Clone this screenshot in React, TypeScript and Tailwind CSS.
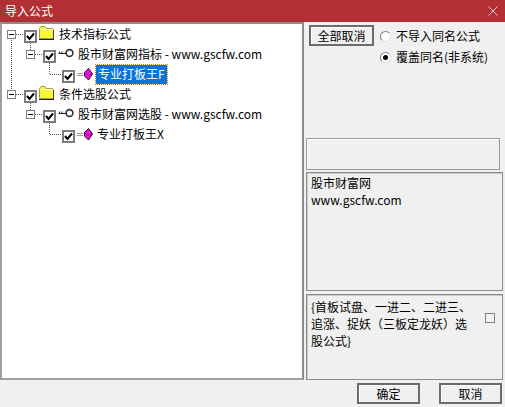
import React from "react";

function Check() {
  return (
    <span className="mt-[4px] flex h-[13px] w-[13px] shrink-0 items-center justify-center border-2 border-[#7c7c7c] bg-white">
      <svg width="9" height="9" viewBox="0 0 9 9"><path d="M1 4 L3.5 7 L8 1.5" fill="none" stroke="#000" strokeWidth="2" /></svg>
    </span>
  );
}

function Minus() {
  return (
    <span className="flex h-[9px] w-[9px] shrink-0 items-center justify-center border border-[#808080] bg-white">
      <span className="h-px w-[5px] bg-black" />
    </span>
  );
}

function Folder({ id }: { id: string }) {
  return (
    <svg width="16" height="14" viewBox="0 0 16 14" className="mb-[3px] shrink-0">
      <defs>
        <pattern id={id} width="2" height="2" patternUnits="userSpaceOnUse">
          <rect width="2" height="2" fill="#ffff00" />
          <rect width="1" height="1" fill="#eeee70" />
          <rect x="1" y="1" width="1" height="1" fill="#eeee70" />
        </pattern>
      </defs>
      <path d="M1.5 12.5 V2.5 L3 0.5 H7 L8.5 2.5 H14.5 L15.5 3.5 V12.5 Z" fill={`url(#${id})`} stroke="#a09a50" />
      <path d="M1 13.5 H16" stroke="#222" />
      <path d="M15.5 4 V13" stroke="#444" />
      <path d="M3 3.5 H14" stroke="#fffde0" />
    </svg>
  );
}

function KeyIcon() {
  return (
    <svg width="16" height="10" viewBox="0 0 16 10" className="mb-[2px] shrink-0">
      <circle cx="11.5" cy="5" r="3.4" fill="#fff" stroke="#333" strokeWidth="1.6" />
      <path d="M0.5 5.5 H8 M1.5 5.5 V3.5 M4 5.5 V3.5" stroke="#222" fill="none" />
    </svg>
  );
}

function Gem() {
  return (
    <svg width="16" height="13" viewBox="0 0 16 13" className="mt-[1px] shrink-0">
      <path d="M0 5.5 H6 M0 7.5 H6" stroke="#999" />
      <path d="M11.5 0.5 L15.5 6 L11.5 12 L7.5 8 V4.5 Z" fill="#f010e0" stroke="#300030" />
      <path d="M8 5 L11.5 7.5 L15 6" stroke="#900090" fill="none" />
    </svg>
  );
}

function Row({ pad, children }: { pad: string; children: React.ReactNode }) {
  return <div className={`flex h-[20px] items-center whitespace-nowrap ${pad}`}>{children}</div>;
}

function Btn({ className, children }: { className: string; children: React.ReactNode }) {
  return (
    <button className={`flex items-center justify-center border-2 border-[#6b6b6b] bg-[#f0f0f0] text-[12px] text-black shadow-[inset_1px_1px_0_#fff] ${className}`}>
      {children}
    </button>
  );
}

function Radio({ on, children }: { on?: boolean; children: React.ReactNode }) {
  return (
    <div className="flex h-[20px] items-center">
      <span className="mr-[5px] flex h-[11px] w-[11px] items-center justify-center rounded-full border border-b-[#e0e0e0] border-l-[#808080] border-r-[#e0e0e0] border-t-[#808080] bg-white">
        {on ? <span className="h-[5px] w-[5px] rounded-full bg-black" /> : null}
      </span>
      <span>{children}</span>
    </div>
  );
}

export default function App() {
  return (
    <div
      className="flex h-[407px] w-[505px] flex-col overflow-hidden bg-[#f0f0f0] text-[12px] leading-[18px] text-black"
      style={{ fontFamily: '"Noto Sans CJK SC", "Liberation Sans", sans-serif' }}
    >
      <div className="flex h-[22px] shrink-0 items-center justify-between bg-[#b22f34] pl-[5px] pr-[7px] text-white">
        <span>导入公式</span>
        <svg width="10" height="10" viewBox="0 0 10 10"><path d="M0.5 0.5 L9.5 9.5 M9.5 0.5 L0.5 9.5" stroke="#e9c9ca" /></svg>
      </div>

      <div className="flex h-[358px] shrink-0">
        <div className="relative h-full w-[304px] shrink-0 border-2 border-b-[#a0a0a0] border-l-[#a0a0a0] border-r-[#8c8c8c] border-t-[#8c8c8c] bg-white">
          <svg width="120" height="130" className="absolute left-0 top-0" fill="none" stroke="#555" strokeDasharray="1 1">
            <path d="M9.5 14 V68 M14 10.5 H22 M28.5 19 V26 M33 30.5 H41 M47.5 39 V50.5 H60 M14 70.5 H22 M28.5 79 V86 M33 90.5 H41 M47.5 99 V110.5 H60" />
          </svg>
          <div className="relative">
            <Row pad="pl-[5px]"><Minus /><span className="w-[8px]" /><Check /><span className="w-[1px]" /><Folder id="f1" /><span className="ml-[5px]">技术指标公式</span></Row>
            <Row pad="pl-[24px]"><Minus /><span className="w-[8px]" /><Check /><span className="w-[2px]" /><KeyIcon /><span className="ml-[4px]">股市财富网指标 - www.gscfw.com</span></Row>
            <Row pad="pl-[60px]"><Check /><span className="w-[2px]" /><Gem /><span className="ml-[3px] flex h-[19px] items-center bg-[#0a73d6] px-[2px] text-white outline-1 outline-dotted outline-[#c08020]">专业打板王F</span></Row>
            <Row pad="pl-[5px]"><Minus /><span className="w-[8px]" /><Check /><span className="w-[1px]" /><Folder id="f2" /><span className="ml-[5px]">条件选股公式</span></Row>
            <Row pad="pl-[24px]"><Minus /><span className="w-[8px]" /><Check /><span className="w-[2px]" /><KeyIcon /><span className="ml-[4px]">股市财富网选股 - www.gscfw.com</span></Row>
            <Row pad="pl-[60px]"><Check /><span className="w-[2px]" /><Gem /><span className="ml-[4px]">专业打板王X</span></Row>
          </div>
        </div>

        <div className="flex min-w-0 flex-1 flex-col px-[2px]">
          <div className="flex h-[116px] shrink-0 pt-[3px]">
            <Btn className="ml-[3px] mr-[6px] h-[21px] w-[65px]">全部取消</Btn>
            <div className="pt-[1px]">
              <Radio>不导入同名公式</Radio>
              <div className="h-[1px]" />
              <Radio on>覆盖同名(非系统)</Radio>
            </div>
          </div>
          <div className="h-[32px] w-[194px] shrink-0 border border-[#9a9a9a] shadow-[inset_1px_1px_0_#fff]" />
          <div className="mt-[2px] h-[119px] shrink-0 border border-[#8c8c8c] px-[4px] pt-[1px] leading-[17px] shadow-[inset_1px_1px_0_#c8c8c8]">
            <div>股市财富网</div>
            <div>www.gscfw.com</div>
          </div>
          <div className="mt-[3px] flex h-[86px] shrink-0 items-start border border-[#8c8c8c] pl-[4px] pt-[2px] leading-[17px] shadow-[inset_1px_1px_0_#c8c8c8]">
            <div className="w-[164px] pt-[1px]">{"{首板试盘、一进二、二进三、追涨、捉妖（三板定龙妖）选股公式}"}</div>
            <span className="ml-[10px] mt-[16px] h-[10px] w-[10px] border border-[#808080] bg-[#f0f0f0]" />
          </div>
        </div>
      </div>

      <div className="flex h-[27px] shrink-0 items-center justify-end pr-[3px]">
        <Btn className="h-[21px] w-[63px]">确定</Btn>
        <Btn className="ml-[19px] h-[21px] w-[63px]">取消</Btn>
      </div>
    </div>
  );
}
